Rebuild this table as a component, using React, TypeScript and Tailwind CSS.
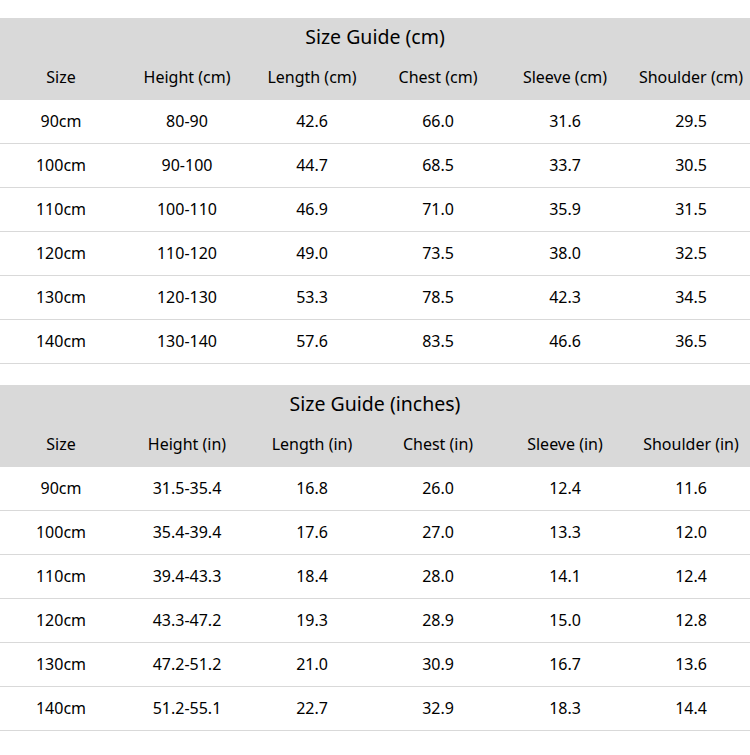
import React from 'react';

type Table = {
  title: string;
  headers: string[];
  rows: string[][];
};

const tables: Table[] = [
  {
    title: 'Size Guide (cm)',
    headers: ['Size', 'Height (cm)', 'Length (cm)', 'Chest (cm)', 'Sleeve (cm)', 'Shoulder (cm)'],
    rows: [
      ['90cm', '80-90', '42.6', '66.0', '31.6', '29.5'],
      ['100cm', '90-100', '44.7', '68.5', '33.7', '30.5'],
      ['110cm', '100-110', '46.9', '71.0', '35.9', '31.5'],
      ['120cm', '110-120', '49.0', '73.5', '38.0', '32.5'],
      ['130cm', '120-130', '53.3', '78.5', '42.3', '34.5'],
      ['140cm', '130-140', '57.6', '83.5', '46.6', '36.5'],
    ],
  },
  {
    title: 'Size Guide (inches)',
    headers: ['Size', 'Height (in)', 'Length (in)', 'Chest (in)', 'Sleeve (in)', 'Shoulder (in)'],
    rows: [
      ['90cm', '31.5-35.4', '16.8', '26.0', '12.4', '11.6'],
      ['100cm', '35.4-39.4', '17.6', '27.0', '13.3', '12.0'],
      ['110cm', '39.4-43.3', '18.4', '28.0', '14.1', '12.4'],
      ['120cm', '43.3-47.2', '19.3', '28.9', '15.0', '12.8'],
      ['130cm', '47.2-51.2', '21.0', '30.9', '16.7', '13.6'],
      ['140cm', '51.2-55.1', '22.7', '32.9', '18.3', '14.4'],
    ],
  },
];

// column widths picked to match the text centres of the screenshot
const cols = 'grid grid-cols-[122px_130px_120px_132px_122px_130px]';

const SizeTable: React.FC<{ table: Table }> = ({ table }) => (
  <div className="overflow-hidden">
    <div className="bg-[#d9d9d9]">
      <div className="h-[40px] flex items-center justify-center text-[19.5px] pb-[3px]">{table.title}</div>
      <div className={`${cols} h-[42px] items-center text-[16px] pb-[5px]`}>
        {table.headers.map((h) => (
          <div key={h} className="text-center whitespace-nowrap">{h}</div>
        ))}
      </div>
    </div>
    {table.rows.map((row) => (
      <div key={row[0]} className={`${cols} h-[44px] items-center border-b border-[#d9d9d9] text-[16px] pb-[2px]`}>
        {row.map((cell, i) => (
          <div key={i} className="text-center whitespace-nowrap">{cell}</div>
        ))}
      </div>
    ))}
  </div>
);

export default function App() {
  return (
    <div className="w-[750px] h-[755px] bg-white text-black pt-[18px] font-['Noto_Sans','Noto_Sans_CJK_SC',sans-serif]">
      <SizeTable table={tables[0]} />
      <div className="h-[21px]" />
      <SizeTable table={tables[1]} />
    </div>
  );
}
